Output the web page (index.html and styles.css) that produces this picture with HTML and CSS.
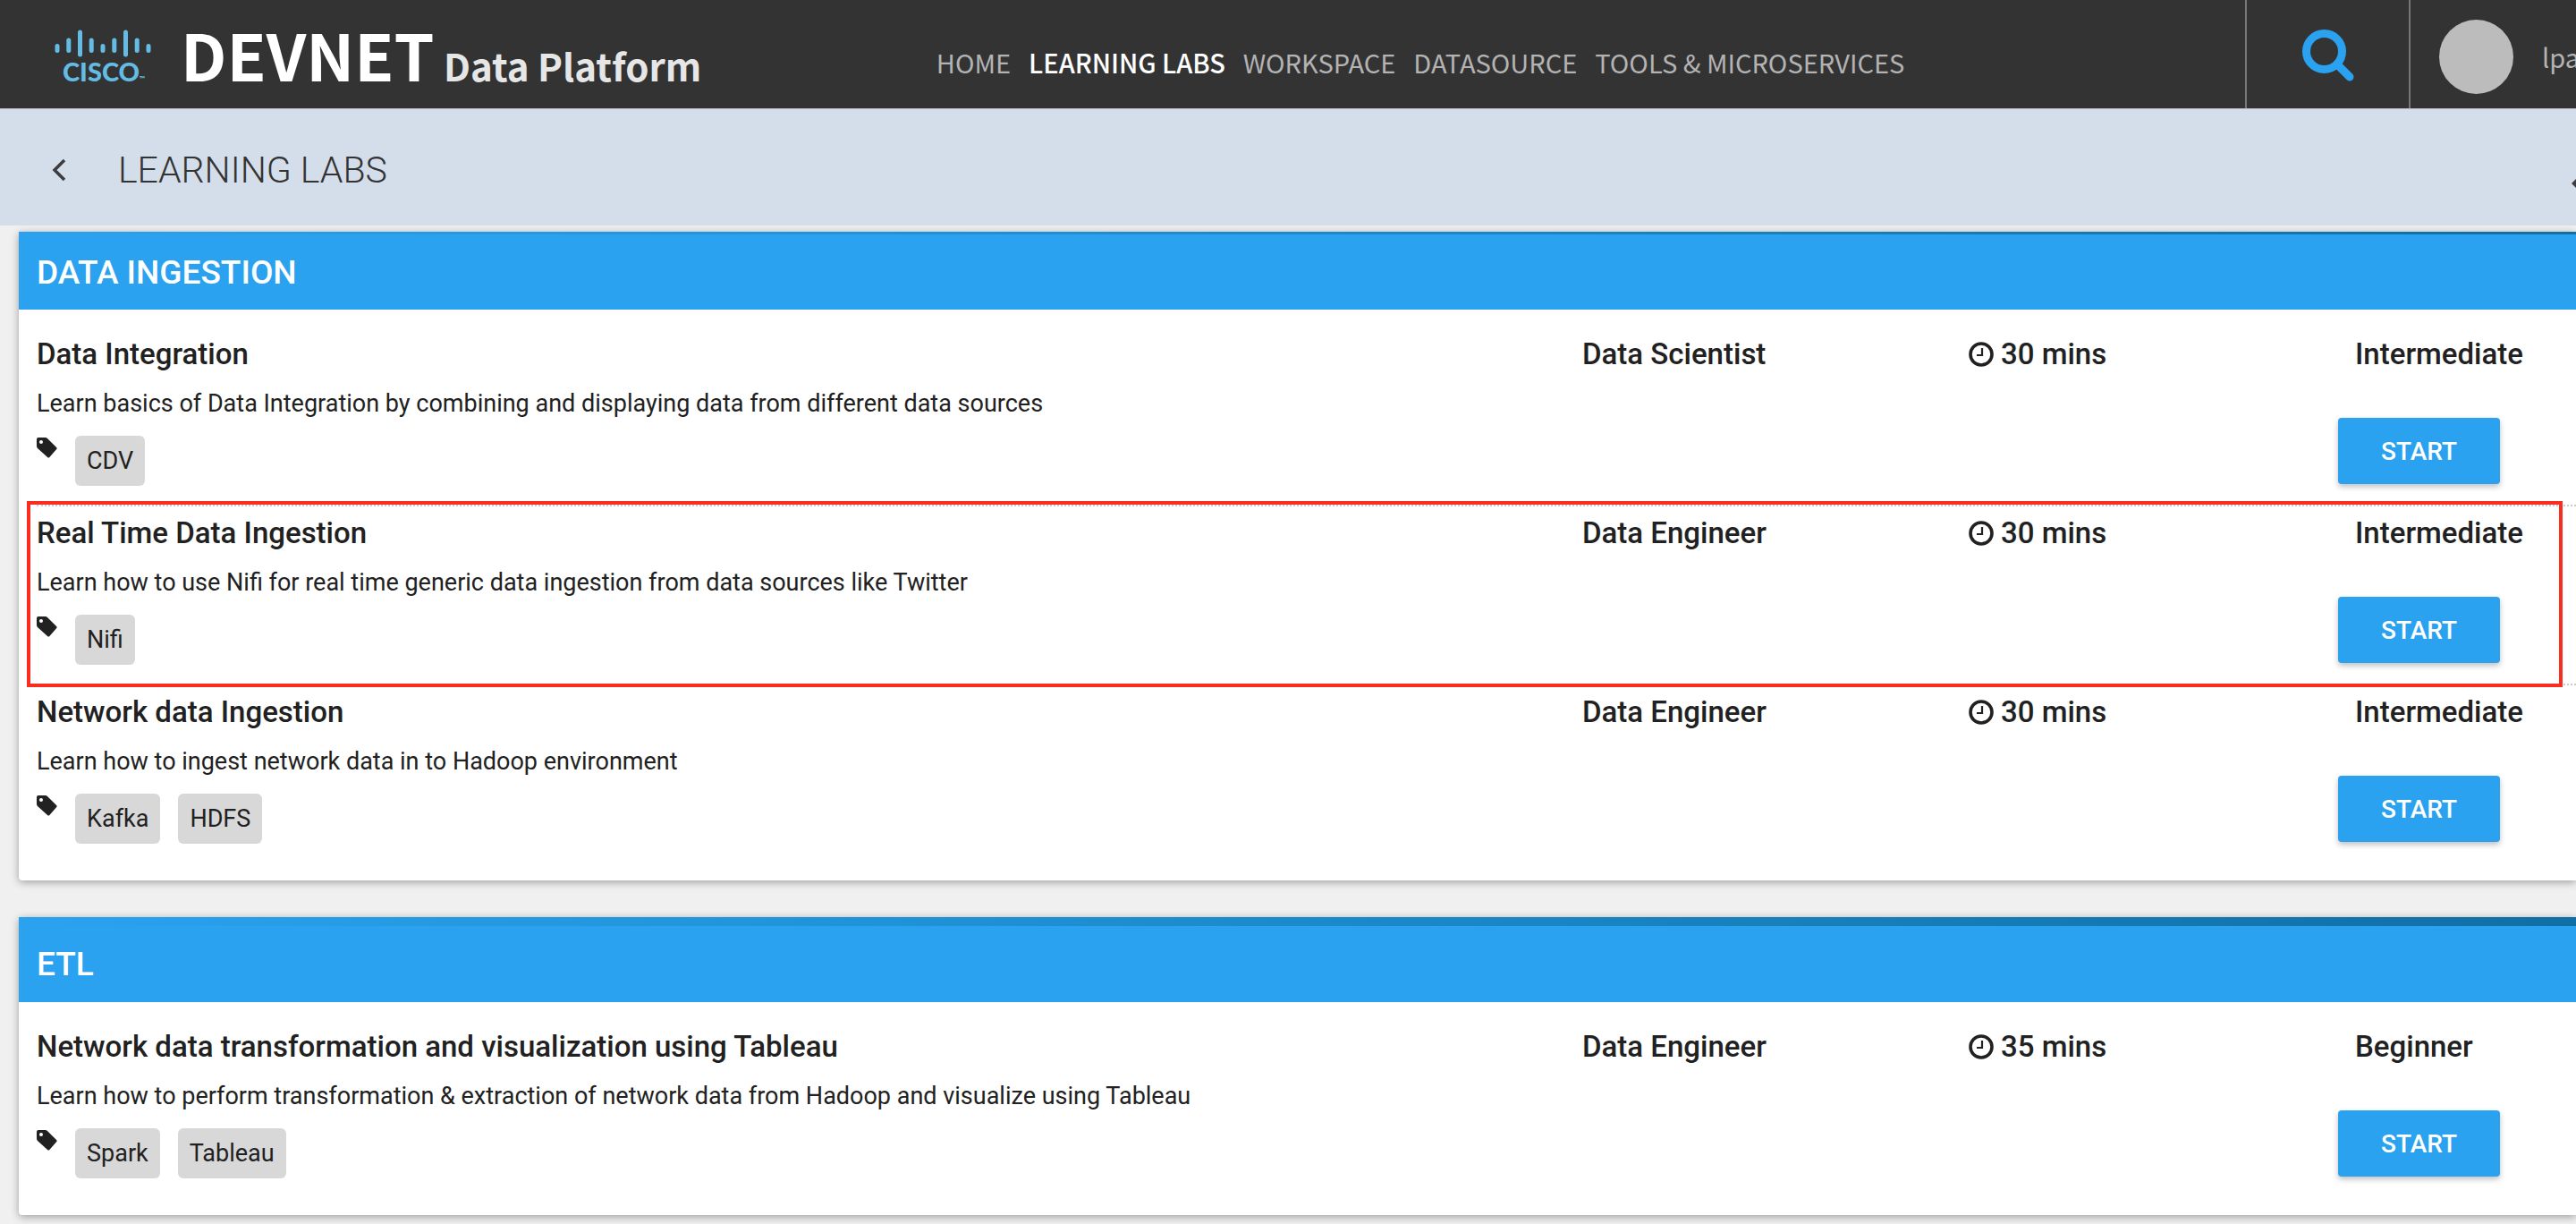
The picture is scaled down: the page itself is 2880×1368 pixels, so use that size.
FILE: index.html
```html
<!DOCTYPE html>
<html lang="en">
<head>
<meta charset="utf-8">
<title>Learning Labs - DevNet Data Platform</title>
<link rel="stylesheet" href="styles.css">
</head>
<body>
<svg class="defs" aria-hidden="true">
  <symbol id="tag" viewBox="0 0 24 24"><path fill-rule="evenodd" d="M2 0h8q1.500 0 2.500 1l10.500 10.500q1.200 1.200 0 2.400l-8 9q-1.200 1.200-2.400 0L1 12.500Q0 11.500 0 10V2Q0 0 2 0zM5.200 3a2.100 2.100 0 1 0 0 4.200a2.100 2.100 0 1 0 0-4.200z"/></symbol>
  <symbol id="clock" viewBox="0 0 28 28"><circle cx="14" cy="14" r="12" fill="none" stroke="currentColor" stroke-width="3.600"/><path d="M15 7v8H9" fill="none" stroke="currentColor" stroke-width="2.200"/></symbol>
</svg>
<header class="topbar">
  <a class="brand" href="#">
    <span class="cisco">
      <svg class="bars" viewBox="0 0 108 32" aria-hidden="true"><g stroke="#64bbe3" stroke-width="5" stroke-linecap="round"><path d="M3 18.500v5M15.800 12v11.500M28.500 3v25M41.200 12v11.500M54 18.500v5M66.800 12v11.500M79.500 3v25M92.200 12v11.500M105 18.500v5"/></g></svg>
      <span class="cisco-name">CISCO<small>™</small></span>
    </span>
    <span class="devnet">DEVNET</span>
    <span class="product">Data Platform</span>
  </a>
  <nav class="nav">
    <a href="#">HOME</a>
    <a href="#" class="active">LEARNING LABS</a>
    <a href="#">WORKSPACE</a>
    <a href="#">DATASOURCE</a>
    <a href="#">TOOLS &amp; MICROSERVICES</a>
  </nav>
  <button class="search" aria-label="Search"><svg viewBox="0 0 58 58" aria-hidden="true"><circle cx="24.500" cy="24.500" r="20" fill="none" stroke="#2aa2ef" stroke-width="9"/><path d="M39 39l14 14" stroke="#2aa2ef" stroke-width="9" stroke-linecap="round"/></svg></button>
  <div class="user"><span class="avatar"></span><span>lpa</span></div>
</header>
<div class="titlebar">
  <button class="back" aria-label="Back"><svg viewBox="0 0 16 26" aria-hidden="true"><path d="M14 2L3 13l11 11" fill="none" stroke="#3c3c40" stroke-width="3.500"/></svg></button>
  <h1>LEARNING LABS</h1>
  <svg class="more" viewBox="0 0 5 10" aria-hidden="true"><path d="M5 0L0 5l5 5z" fill="#3c3c40"/></svg>
</div>
<main>
  <section class="panel first">
    <h2>DATA INGESTION</h2>
    <div class="labs">
      <article class="lab">
        <div><h3>Data Integration</h3><p>Learn basics of Data Integration by combining and displaying data from different data sources</p>
          <div class="tags"><svg><use href="#tag"/></svg><span>CDV</span></div></div>
        <div class="meta">Data Scientist</div>
        <div class="meta"><svg><use href="#clock"/></svg>30 mins</div>
        <div><div class="meta">Intermediate</div><button class="start">START</button></div>
      </article>
      <article class="lab marked">
        <div><h3>Real Time Data Ingestion</h3><p>Learn how to use Nifi for real time generic data ingestion from data sources like Twitter</p>
          <div class="tags"><svg><use href="#tag"/></svg><span>Nifi</span></div></div>
        <div class="meta">Data Engineer</div>
        <div class="meta"><svg><use href="#clock"/></svg>30 mins</div>
        <div><div class="meta">Intermediate</div><button class="start">START</button></div>
      </article>
      <article class="lab">
        <div><h3>Network data Ingestion</h3><p>Learn how to ingest network data in to Hadoop environment</p>
          <div class="tags"><svg><use href="#tag"/></svg><span>Kafka</span><span>HDFS</span></div></div>
        <div class="meta">Data Engineer</div>
        <div class="meta"><svg><use href="#clock"/></svg>30 mins</div>
        <div><div class="meta">Intermediate</div><button class="start">START</button></div>
      </article>
    </div>
  </section>
  <section class="panel">
    <h2>ETL</h2>
    <div class="labs">
      <article class="lab">
        <div><h3>Network data transformation and visualization using Tableau</h3><p>Learn how to perform transformation &amp; extraction of network data from Hadoop and visualize using Tableau</p>
          <div class="tags"><svg><use href="#tag"/></svg><span>Spark</span><span>Tableau</span></div></div>
        <div class="meta">Data Engineer</div>
        <div class="meta"><svg><use href="#clock"/></svg>35 mins</div>
        <div><div class="meta">Beginner</div><button class="start">START</button></div>
      </article>
    </div>
  </section>
</main>
</body>
</html>
```
FILE: styles.css
```css
* { box-sizing: border-box; }
body { margin: 0; background: #f0f0f0; color: #212121; font-family: Roboto, sans-serif; font-size: 27px; overflow-x: hidden; }
h1, h2, h3, p { margin: 0; }
button { border: 0; padding: 0; background: none; font-family: inherit; cursor: pointer; }
a { text-decoration: none; }
.defs { display: none; }

.topbar { display: flex; height: 121px; background: #333; font-family: "Noto Sans CJK SC", sans-serif; }
.brand { flex: 0 0 36vw; display: flex; align-items: last baseline; padding: 0 0 16px 60px; color: #fff; white-space: nowrap; }
.cisco { display: flex; flex-direction: column; width: 142px; color: #64bbe3; }
.bars { width: 110px; height: 32px; }
.cisco-name { padding-left: 10px; font: 900 29px/30px Lato, sans-serif; }
.cisco-name small { font-size: 8px; }
.devnet { width: 294px; font-size: 72px; font-weight: 700; line-height: 90px; }
.product { font-size: 42px; font-weight: 700; line-height: 60px; color: #e6e6e6; }
.nav { flex: 1; display: flex; align-items: center; gap: 20px; padding: 16px 0 0 10px; white-space: nowrap; }
.nav a { color: #b3b3b3; font-size: 29px; line-height: 60px; }
.nav .active { color: #fff; font-weight: 500; }
.search { width: 183px; padding-top: 2px; border-left: 2px solid #777; }
.search svg { width: 58px; height: 58px; display: block; margin: 0 auto; }
.user { width: 187px; display: flex; align-items: center; gap: 32px; padding: 5px 0 0 32px; border-left: 2px solid #777; color: #b3b3b3; font-size: 29px; overflow: hidden; }
.avatar { flex: none; width: 83px; height: 83px; border-radius: 50%; background: #bcbcbc; }

.titlebar { display: flex; align-items: center; height: 131px; padding: 5px 0 0 58px; background: #d4ddea; border-top: 1px solid #b5bcc5; }
.back { width: 74px; text-align: left; }
.back svg { display: block; width: 16px; height: 26px; }
.titlebar h1 { flex: 1; font-size: 41px; font-weight: 300; line-height: 50px; color: #333; }
.more { width: 5px; height: 10px; margin-top: 30px; }

main { padding: 7px 0 10px 21px; }
.panel { margin-bottom: 41px; background: #fff; border-radius: 4px 0 0 4px; box-shadow: 0 2px 10px rgba(0, 0, 0, .35); }
.panel h2 { padding: 21px 20px 10px; background: linear-gradient(90deg, #2aa2ef, #1b8acb 50%, #106fa5) 0 0 / 100% 10px no-repeat #2aa2ef; color: #fff; font-size: 37px; font-weight: 500; line-height: 64px; }
.panel.first h2 { padding-top: 14px; padding-bottom: 9px; background-size: 100% 3px; }
.labs { padding: 20px 0 18px 20px; }
.lab { position: relative; display: grid; grid-template-columns: 60vw 15vw 15vw auto; padding: 8px 0 21px; border-bottom: 2px dotted #ccc; }
.lab:last-child { border-bottom-color: transparent; }
.lab h3, .meta { font-size: 33px; font-weight: 500; line-height: 44px; }
.meta svg { width: 28px; height: 28px; margin-right: 8px; vertical-align: -3px; }
.lab p { margin-top: 15px; line-height: 36px; }
.tags { display: flex; gap: 20px; margin-top: 18px; }
.tags svg { width: 23px; height: 23px; margin-top: 2px; fill: #212121; }
.tags span { padding: 0 13px; border-radius: 6px; background: #d8d8d8; line-height: 56px; }
.start { display: block; width: 181px; height: 74px; margin: 49px 0 0 -19px; border-radius: 4px; background: #2aa2ef; color: #fff; font-size: 28px; font-weight: 500; box-shadow: 0 3px 6px rgba(0, 0, 0, .25); }
.marked::after { content: ""; position: absolute; top: -6px; right: 15px; bottom: -4px; left: -11px; border: 4px solid #fb2d20; pointer-events: none; }
```
